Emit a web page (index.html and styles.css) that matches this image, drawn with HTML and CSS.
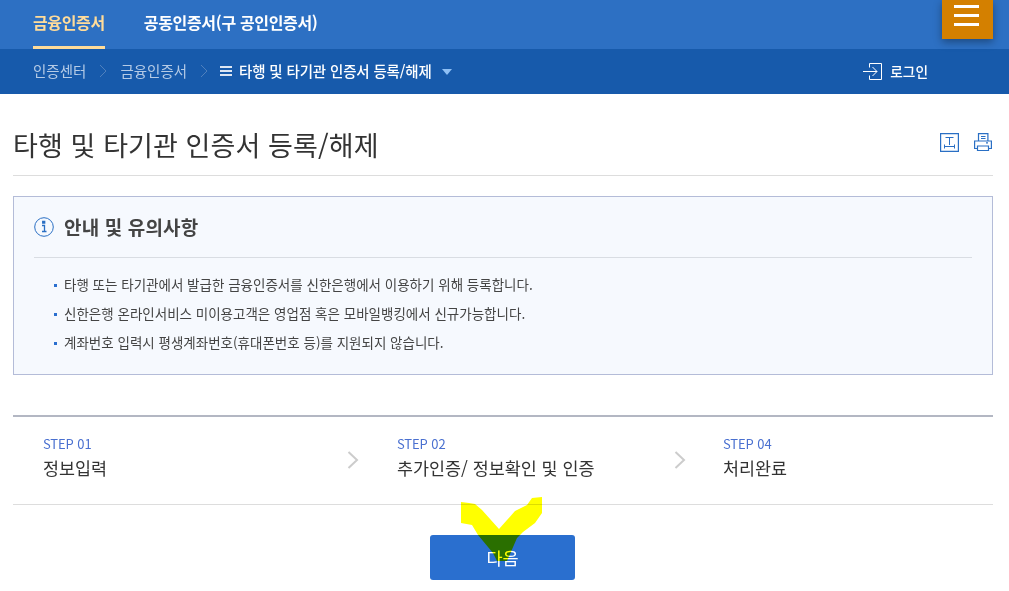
FILE: index.html
```html
<!DOCTYPE html>
<html lang="ko">
<head>
    <meta charset="UTF-8">
    <meta name="viewport" content="width=device-width, initial-scale=1.0">
    <title>타행 및 타기관 인증서 등록/해제</title>
    <link rel="stylesheet" href="styles.css">
</head>
<body>
    <header class="header">
        <div class="tab-bar">
            <a href="#" class="tab tab-active">금융인증서</a>
            <a href="#" class="tab">공동인증서(구 공인인증서)</a>
            <button class="menu-button" aria-label="메뉴">
                <span></span><span></span><span></span>
            </button>
        </div>
        <div class="crumb-bar">
            <a href="#" class="crumb">인증센터</a>
            <svg class="crumb-sep" width="8" height="14" viewBox="0 0 8 14"><path d="M1 1l6 6-6 6" fill="none" stroke="#4f80bd" stroke-width="1"/></svg>
            <a href="#" class="crumb">금융인증서</a>
            <svg class="crumb-sep crumb-sep-last" width="8" height="14" viewBox="0 0 8 14"><path d="M1 1l6 6-6 6" fill="none" stroke="#4f80bd" stroke-width="1"/></svg>
            <div class="crumb-current">
                <span class="crumb-lines"><i></i><i></i><i></i></span>
                <span>타행 및 타기관 인증서 등록/해제</span>
                <span class="crumb-caret"></span>
            </div>
            <a href="#" class="login">
                <svg width="19" height="17" viewBox="0 0 19 17"><path d="M6.500 4.500V.5h12v16h-12v-4M0 8.500h14M9.500 4L14 8.500 9.500 13" fill="none" stroke="#fff" stroke-width="1"/></svg>
                <span>로그인</span>
            </a>
        </div>
    </header>

    <main class="content">
        <div class="title-row">
            <h1 class="page-title">타행 및 타기관 인증서 등록/해제</h1>
            <div class="title-tools">
                <svg width="19" height="19" viewBox="0 0 19 19"><path d="M.6.600h17.800v17.800H.6z" fill="none" stroke="#2a6fc4" stroke-width="1.200"/><path d="M5.500 4.500h8M9.500 4.500V12M4.500 13.500h10M4.500 11.500v4M14.500 11.500v4" fill="none" stroke="#2a6fc4" stroke-width="1"/></svg>
                <svg width="18" height="18" viewBox="0 0 18 18"><path d="M4.500 8V.6h9.400V8M3 15.500H.6V8h16.800v7.500H15M3.500 13h11v4.500h-11zM7 3.500h4.500M7 5.500h4.500M12 9.800h2" fill="none" stroke="#2a6fc4" stroke-width="1.200"/></svg>
            </div>
        </div>

        <section class="notice">
            <div class="notice-head">
                <svg width="20" height="20" viewBox="0 0 20 20"><circle cx="10" cy="10" r="9.300" fill="none" stroke="#2a6fc4" stroke-width="1"/><path d="M8.700 6h2V4.500h-2zM8 8.500h2.500v6M8 14.500h4.500" fill="none" stroke="#2a6fc4" stroke-width="1.300"/></svg>
                <h2 class="notice-title">안내 및 유의사항</h2>
            </div>
            <ul class="notice-list">
                <li>타행 또는 타기관에서 발급한 금융인증서를 신한은행에서 이용하기 위해 등록합니다.</li>
                <li>신한은행 온라인서비스 미이용고객은 영업점 혹은 모바일뱅킹에서 신규가능합니다.</li>
                <li>계좌번호 입력시 평생계좌번호(휴대폰번호 등)를 지원되지 않습니다.</li>
            </ul>
        </section>

        <div class="steps">
            <div class="step step-one">
                <div class="step-no">STEP 01</div>
                <div class="step-name">정보입력</div>
            </div>
            <svg class="step-arrow" width="12" height="18" viewBox="0 0 12 18"><path d="M1.500 1l8.500 8-8.500 8" fill="none" stroke="#ccc" stroke-width="2"/></svg>
            <div class="step step-two">
                <div class="step-no">STEP 02</div>
                <div class="step-name">추가인증/ 정보확인 및 인증</div>
            </div>
            <svg class="step-arrow" width="12" height="18" viewBox="0 0 12 18"><path d="M1.500 1l8.500 8-8.500 8" fill="none" stroke="#ccc" stroke-width="2"/></svg>
            <div class="step step-three">
                <div class="step-no">STEP 04</div>
                <div class="step-name">처리완료</div>
            </div>
        </div>

        <div class="actions">
            <a href="#" class="next-button">다음</a>
        </div>
    </main>

    <!-- yellow marker scribbled on top of the capture -->
    <svg class="marker" width="81" height="64" viewBox="461 497 81 64">
        <path d="M461 502l8 1 6 1 7 6 17 19 8-9 8-9 12-6 5-7 10-1v16l-7 10-12 9-6 6-10 23h-10l-4-8-15-18-6-10-11-2z" fill="#ff0"/>
    </svg>
</body>
</html>
```

FILE: styles.css
```css
body {
    margin: 0;
    font-family: "Noto Sans CJK KR", "Noto Sans", sans-serif;
    color: #333;
    background: #fff;
    overflow: hidden;
}

a {
    text-decoration: none;
    color: inherit;
}

.tab-bar {
    display: flex;
    height: 49px;
    padding: 0 16px 0 33px;
    background: #2d70c3;
    gap: 39px;
}

.tab {
    height: 46px;
    line-height: 45px;
    font-size: 16px;
    font-weight: 700;
    letter-spacing: -0.35px;
    color: #fff;
}

.tab-active {
    color: #ffdc9a;
    border-bottom: 3px solid #ffdc9a;
}

.menu-button {
    display: flex;
    flex-direction: column;
    gap: 6px;
    width: 51px;
    height: 39px;
    margin-left: auto;
    padding: 5px 14px 0 12px;
    border: 0;
    background: #d48000;
    box-shadow: 0 3px 8px rgba(0,0,0,0.35);
}

.menu-button span {
    display: block;
    width: 25px;
    height: 3px;
    background: #fff;
}

.crumb-bar {
    display: flex;
    align-items: center;
    box-sizing: border-box;
    height: 45px;
    padding: 0 81px 2px 33px;
    background: #175aab;
    font-size: 14.5px;
    color: #fff;
}

.crumb {
    color: #b5cbe6;
}

.crumb-sep {
    margin: 0 13px;
}

.crumb-sep-last {
    margin-right: 12px;
}

.crumb-current {
    display: flex;
    align-items: center;
    font-weight: 500;
    letter-spacing: -0.15px;
}

.crumb-lines {
    display: flex;
    flex-direction: column;
    gap: 2px;
    width: 12px;
    margin-right: 7px;
}

.crumb-lines i {
    display: block;
    height: 2px;
    background: #dce6f3;
}

.crumb-caret {
    width: 0;
    height: 0;
    margin: 2px 0 0 10px;
    border-left: 5.5px solid transparent;
    border-right: 5.5px solid transparent;
    border-top: 6px solid #8fc0f5;
}

.login {
    display: flex;
    align-items: center;
    gap: 8px;
    margin-left: auto;
    font-size: 13.7px;
    font-weight: 500;
}

.login svg {
    margin-top: 2px;
}

.content {
    padding: 0 16px 0 13px;
}

.title-row {
    display: flex;
    justify-content: space-between;
    align-items: center;
    box-sizing: border-box;
    height: 82px;
    padding-top: 20px;
    border-bottom: 1px solid #ddd;
}

.page-title {
    margin: 0;
    font-size: 27px;
    font-weight: 400;
    letter-spacing: 0.1px;
    color: #333;
}

.title-tools {
    display: flex;
    gap: 15px;
    margin-top: -5px;
    padding-right: 1px;
}

.notice {
    height: 177px;
    margin-top: 20px;
    padding: 0 20px;
    border: 1px solid #b4bcd8;
    background: #f6f9fe;
}

.notice-head {
    display: flex;
    align-items: center;
    gap: 10px;
    height: 60px;
    border-bottom: 1px solid #d9dde3;
}

.notice-title {
    margin: 0 0 2px;
    font-size: 19px;
    font-weight: 700;
    letter-spacing: 0.15px;
    color: #444;
}

.notice-list {
    margin: 0;
    padding: 12px 0 0 20px;
    list-style: none;
    font-size: 13.5px;
    color: #444;
}

.notice-list li {
    position: relative;
    height: 29px;
    line-height: 29px;
    padding-left: 10px;
}

.notice-list li::before {
    content: "";
    position: absolute;
    left: 0;
    top: 14px;
    width: 3px;
    height: 3px;
    background: #2a6fcf;
}

.steps {
    display: flex;
    align-items: center;
    height: 87px;
    margin-top: 40px;
    border-top: 2px solid #b3b7c3;
    border-bottom: 1px solid #ddd;
}

.step {
    padding-bottom: 5px;
    box-sizing: border-box;
}

.step-arrow {
    margin-bottom: 2px;
}

.step-one {
    width: 334px;
    padding-left: 30px;
}

.step-two {
    width: 315px;
    padding-left: 38px;
}

.step-three {
    padding-left: 37px;
}

.step-no {
    font-size: 13px;
    line-height: 19px;
    letter-spacing: -0.1px;
    color: #4a70d0;
}

.step-name {
    font-size: 17.4px;
    line-height: 30px;
    color: #333;
}

.actions {
    display: flex;
    justify-content: center;
    padding: 30px 1px 0 0;
}

.next-button {
    width: 145px;
    height: 45px;
    line-height: 45px;
    border-radius: 3px;
    text-align: center;
    font-size: 17.5px;
    color: #fff;
    background: #2a6fcf;
}

.marker {
    position: absolute;
    left: 461px;
    top: 497px;
    mix-blend-mode: multiply;
}
```
